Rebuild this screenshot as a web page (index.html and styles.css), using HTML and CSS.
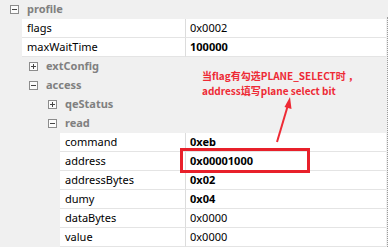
FILE: index.html
```html
<!DOCTYPE html>
<html>
<head>
<title>Property grid</title>
<link rel="stylesheet" href="styles.css">
</head>
<body>

<div class="frame">
	<div class="grid">
		<div class="row cat"><span class="ind" data-l="0"></span><span class="gut"><span class="tog minus"></span></span><span class="catname">profile</span></div>
		<div class="row prop"><span class="ind" data-l="0"></span><span class="gut"></span><span class="cell key">flags</span><span class="cell val">0x0002</span></div>
		<div class="row prop"><span class="ind" data-l="0"></span><span class="gut"></span><span class="cell key">maxWaitTime</span><span class="cell val bold">100000</span></div>
		<div class="row cat"><span class="ind" data-l="1"></span><span class="gut"><span class="tog plus"></span></span><span class="catname">extConfig</span></div>
		<div class="row cat"><span class="ind" data-l="1"></span><span class="gut"><span class="tog minus"></span></span><span class="catname">access</span></div>
		<div class="row cat"><span class="ind" data-l="2"></span><span class="gut"><span class="tog plus"></span></span><span class="catname">qeStatus</span></div>
		<div class="row cat"><span class="ind" data-l="2"></span><span class="gut"><span class="tog minus"></span></span><span class="catname">read</span></div>
		<div class="row prop"><span class="ind" data-l="2"></span><span class="gut"></span><span class="cell key">command</span><span class="cell val bold">0xeb</span></div>
		<div class="row prop"><span class="ind" data-l="2"></span><span class="gut"></span><span class="cell key">address</span><span class="cell val bold">0x00001000</span></div>
		<div class="row prop"><span class="ind" data-l="2"></span><span class="gut"></span><span class="cell key">addressBytes</span><span class="cell val bold">0x02</span></div>
		<div class="row prop"><span class="ind" data-l="2"></span><span class="gut"></span><span class="cell key">dumy</span><span class="cell val bold">0x04</span></div>
		<div class="row prop"><span class="ind" data-l="2"></span><span class="gut"></span><span class="cell key">dataBytes</span><span class="cell val">0x0000</span></div>
		<div class="row prop"><span class="ind" data-l="2"></span><span class="gut"></span><span class="cell key">value</span><span class="cell val">0x0000</span></div>
	</div>
	<div class="edge"></div>

	<!-- annotation drawn over the grid -->
	<div class="note">
		<div>当flag有勾选PLANE_SELECT时 ，</div>
		<div>address填写plane select bit</div>
	</div>
	<div class="mark"></div>
	<svg class="arrow" width="388" height="247" viewBox="0 0 388 247">
		<line x1="277" y1="142" x2="288" y2="105" stroke="#ee2a35" stroke-width="2"/>
		<polygon points="290,97 284.5,107 291.5,109" fill="#ee2a35"/>
	</svg>
</div>

</body>
</html>
```

FILE: styles.css
```css
body {
  margin: 0;
  background-color: #f0f0f0;
  font-family: "Noto Sans", "DejaVu Sans", sans-serif;
  font-size: 11px;
  color: #000;
}

.frame {
  position: relative;
  width: 388px;
  height: 247px;
  display: flex;
  overflow: hidden;
}

.grid {
  width: 386px;
}

.edge {
  width: 1px;
  margin-top: 17px;
  border-right: 1px dotted #9a9a9a;
}

.row {
  display: flex;
  height: 19px;
}

.ind[data-l="0"] { width: 0; }
.ind[data-l="1"] { width: 19px; }
.ind[data-l="2"] { width: 38px; }

.gut {
  width: 22px;
  flex-shrink: 0;
  position: relative;
}

.tog {
  position: absolute;
  left: 10px;
  top: 5px;
  width: 7px;
  height: 7px;
  border: 1px solid #8c8c8c;
  background-color: #fbfbfb;
}

.tog::before {
  content: "";
  position: absolute;
  left: 1px;
  top: 3px;
  width: 5px;
  height: 1px;
  background-color: #444;
}

.plus::after {
  content: "";
  position: absolute;
  left: 3px;
  top: 1px;
  width: 1px;
  height: 5px;
  background-color: #444;
}

.catname {
  padding-left: 5px;
  line-height: 18px;
  font-weight: bold;
  color: #808080;
}

.cell {
  background-color: #fff;
  border-bottom: 1px solid #e4e4e4;
  line-height: 18px;
  white-space: nowrap;
}

.key {
  flex: 1;
  padding-left: 5px;
}

.val {
  width: 196px;
  padding-left: 4px;
  border-left: 1px solid #dcdcdc;
}

.bold {
  font-weight: bold;
}

.note {
  position: absolute;
  left: 202px;
  top: 68px;
  color: #ee2a35;
  font-family: "Noto Sans CJK SC", "Noto Sans", sans-serif;
  font-weight: bold;
  font-size: 10px;
  line-height: 15px;
  white-space: nowrap;
}

.mark {
  position: absolute;
  left: 180px;
  top: 148px;
  width: 124px;
  height: 19px;
  border: 3px solid #e8202a;
}

.arrow {
  position: absolute;
  left: 0;
  top: 0;
}
```
